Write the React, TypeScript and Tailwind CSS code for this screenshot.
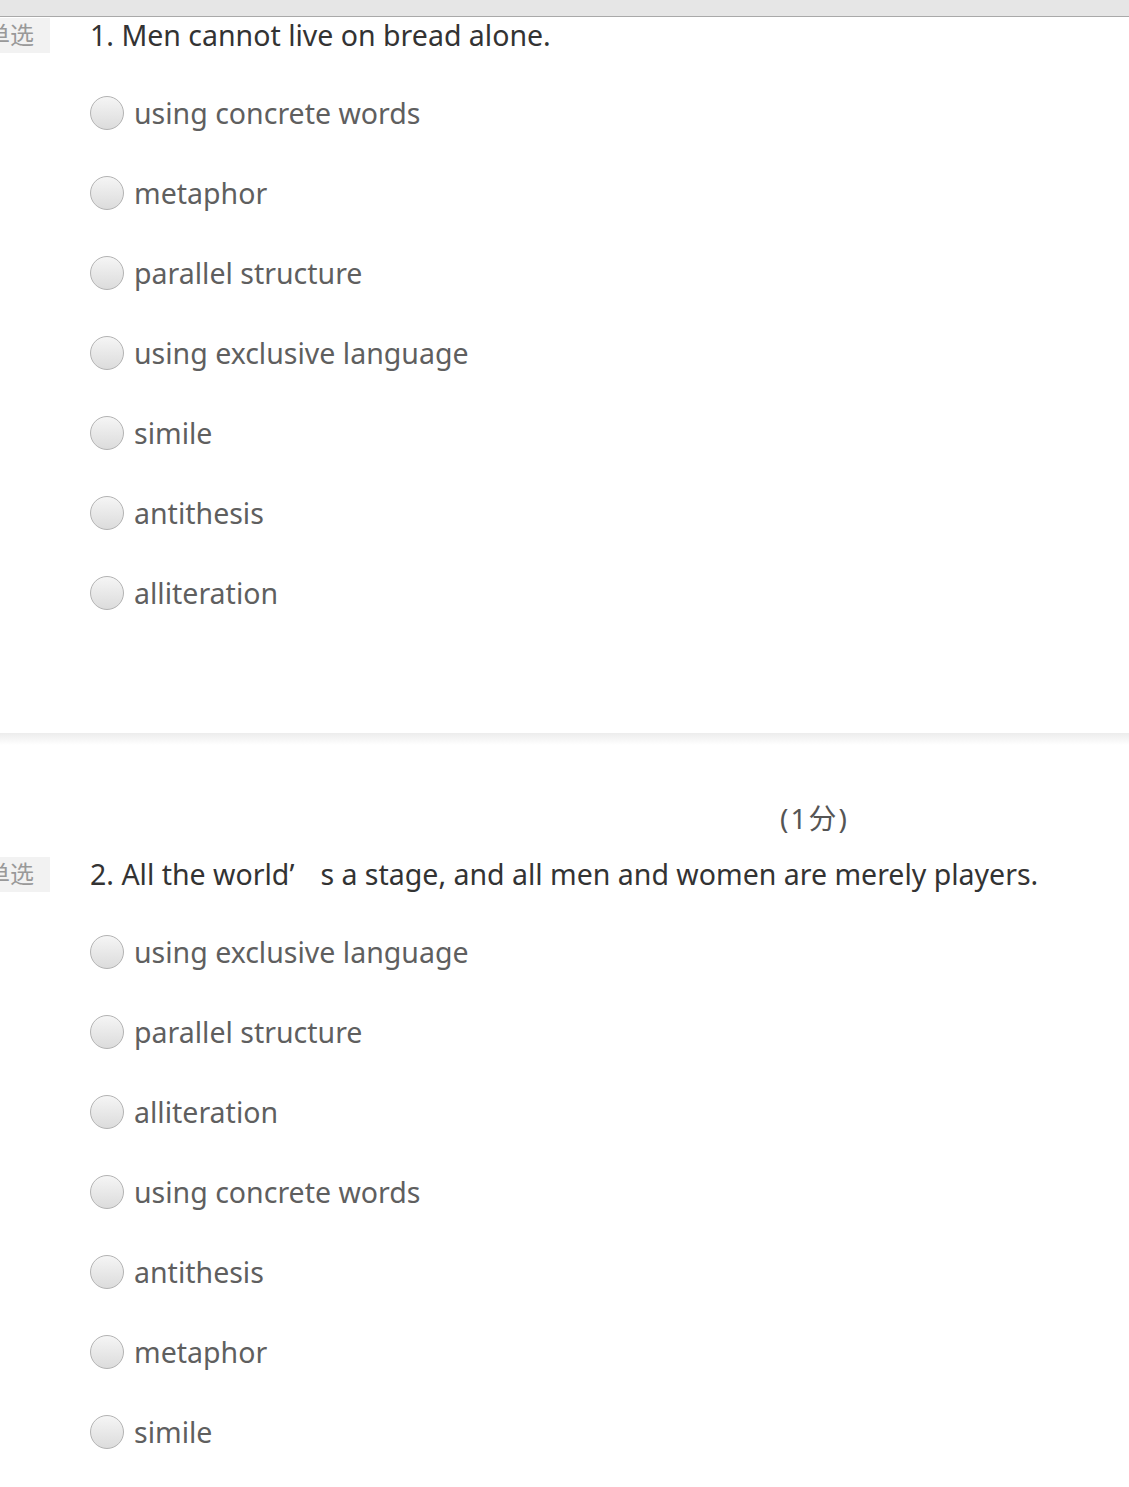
const questions = [
  {
    no: 1,
    title: <>Men cannot live on bread alone.</>,
    options: [
      "using concrete words",
      "metaphor",
      "parallel structure",
      "using exclusive language",
      "simile",
      "antithesis",
      "alliteration",
    ],
  },
  {
    no: 2,
    title: (
      <>
        All the world
        <span className="inline-block w-[31px]">{"\u2019"}</span>s a stage, and all men and women are merely players.
      </>
    ),
    options: [
      "using exclusive language",
      "parallel structure",
      "alliteration",
      "using concrete words",
      "antithesis",
      "metaphor",
      "simile",
    ],
  },
];

const font = { fontFamily: '"Noto Sans", "Noto Sans CJK SC", sans-serif' };

function Radio() {
  return (
    <span className="block w-[34px] h-[34px] rounded-full border border-[#b3b3b3] bg-gradient-to-b from-[#f5f5f5] to-[#dcdcdc] shrink-0" />
  );
}

function Question({ q }: { q: (typeof questions)[number] }) {
  return (
    <div>
      <div className="flex h-[36px] items-start">
        <div className="w-[50px] h-[35px] mt-[1px] bg-[#f2f2f2] overflow-hidden relative shrink-0">
          <span className="absolute right-[16px] top-0 leading-[34px] text-[24px] text-[#999] whitespace-nowrap">
            单选
          </span>
        </div>
        <div className="ml-[40px] text-[28.5px] leading-[36px] text-[#333] whitespace-nowrap">
          {q.no}. {q.title}
        </div>
      </div>
      <div className="mt-[20px]">
        {q.options.map((opt, i) => (
          <div key={i} className="h-[80px] flex items-center pl-[90px]">
            <Radio />
            <span className="ml-[10px] text-[28.5px] text-[#5f5f5f] leading-none">{opt}</span>
          </div>
        ))}
      </div>
    </div>
  );
}

export default function App() {
  return (
    <div className="w-[1129px] min-h-[1487px] bg-white overflow-hidden" style={font}>
      <div className="h-[17px] bg-[#e6e6e6] border-b border-[#a9a9a9]" />
      <div className="bg-white pb-[100px]">
        <Question q={questions[0]} />
      </div>
      <div className="h-[12px] bg-gradient-to-b from-[#ececec] to-white" />
      <div className="pt-[55px]">
        <div className="pl-[780px] h-[36px] leading-[36px] text-[28px] tracking-[2px] text-[#555]">(1分)</div>
        <div className="mt-[20px]">
          <Question q={questions[1]} />
        </div>
      </div>
    </div>
  );
}
